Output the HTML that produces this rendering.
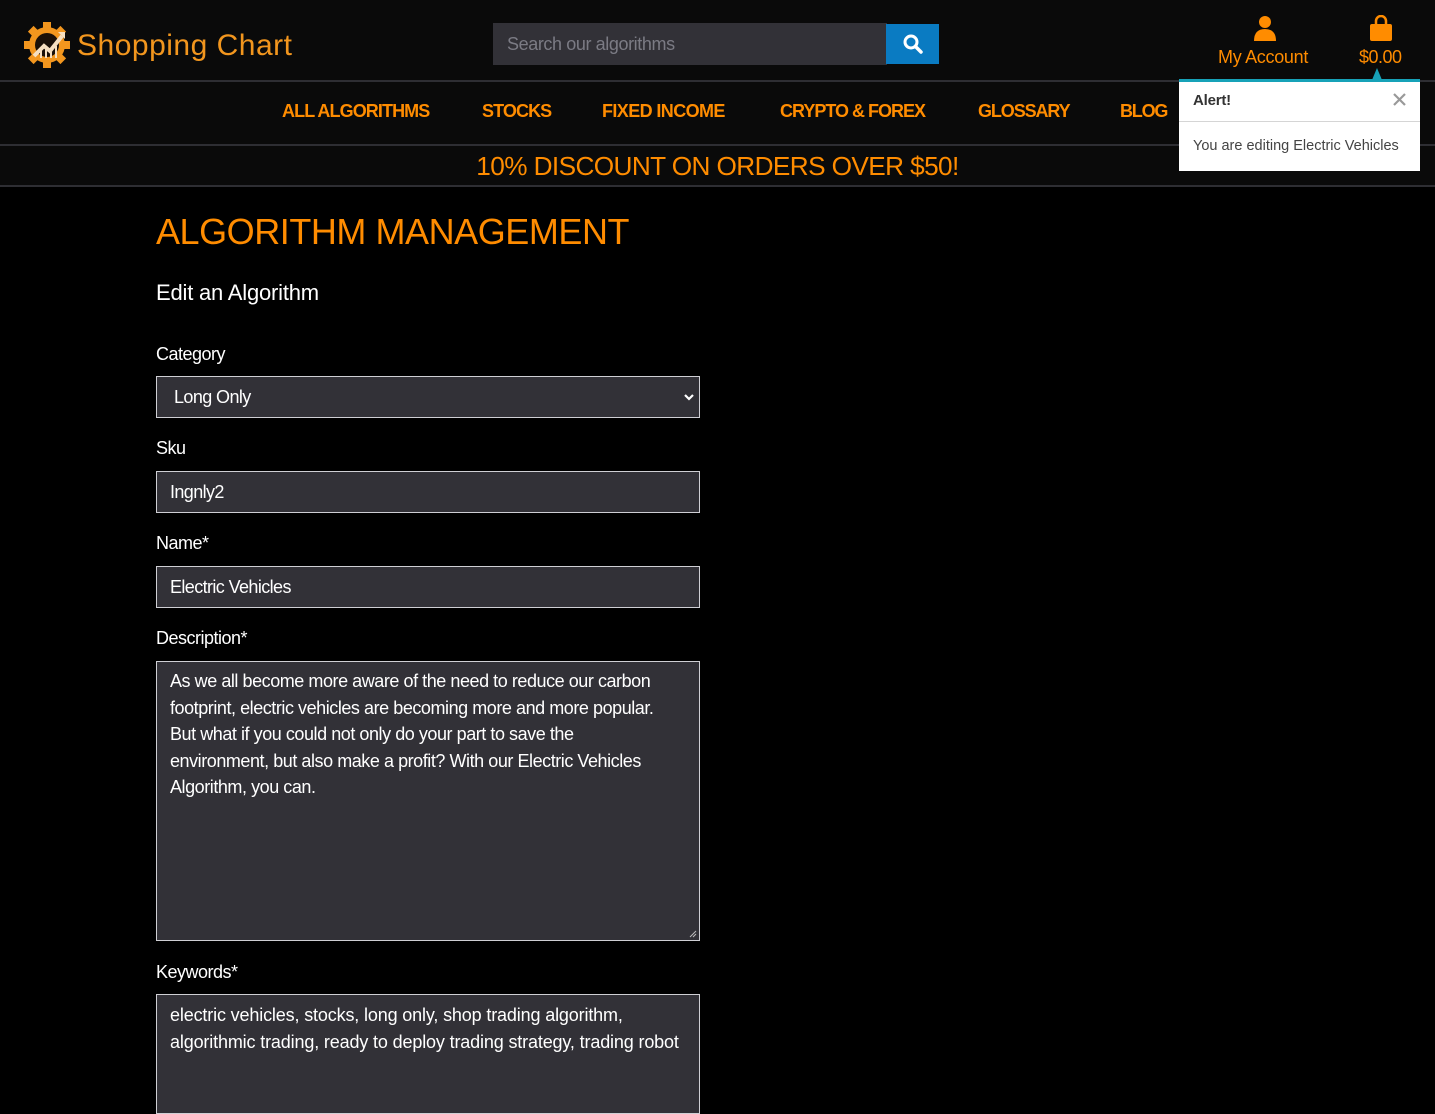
<!DOCTYPE html>
<html><head><meta charset="utf-8">
<style>
*{margin:0;padding:0;box-sizing:border-box}
body{width:1435px;height:1092px;background:#000;font-family:"Liberation Sans",sans-serif;position:relative;overflow:hidden;color:#fff}
.abs{position:absolute}
.hdr{left:0;top:0;width:1435px;height:187px;background:#0a0a0a}
.line{left:0;width:1435px;height:2px;background:#2e2e33}
.nav{top:101px;font-size:18px;font-weight:bold;color:#ff8c00;letter-spacing:-0.9px;white-space:nowrap}
.lbl{left:156px;font-size:18px;letter-spacing:-0.5px;color:#fff}
.box{left:156px;width:544px;background:#323137;border:1px solid #cfcfd4;font-size:18px;letter-spacing:-0.6px;color:#fff;padding-left:13px}
</style></head><body>
<div class="abs hdr"></div>
<div class="abs line" style="top:80px"></div>
<div class="abs line" style="top:144px"></div>
<div class="abs line" style="top:185px"></div>

<svg class="abs" style="left:22px;top:20px" width="50" height="50" viewBox="0 0 50 50">
<g fill="#f2961e">
<circle cx="25" cy="25" r="18"/>
<rect x="21" y="2" width="8" height="8"/><rect x="21" y="40" width="8" height="8"/>
<rect x="2" y="21" width="8" height="8"/><rect x="40" y="21" width="8" height="8"/>
<rect x="21" y="2" width="8" height="8" transform="rotate(45 25 25)"/><rect x="21" y="40" width="8" height="8" transform="rotate(45 25 25)"/>
<rect x="2" y="21" width="8" height="8" transform="rotate(45 25 25)"/><rect x="40" y="21" width="8" height="8" transform="rotate(45 25 25)"/>
</g>
<circle cx="25" cy="25" r="12" fill="#1a1008"/>
<path d="M12 36 L22 26 L28 31 L40 16" stroke="#f6dfc0" stroke-width="4" fill="none"/>
<path d="M36 12 L43 12 L43 19 Z" fill="#f6dfc0"/>
<path d="M19 38V30M24 38V28M29 38V32M34 38V26" stroke="#f6dfc0" stroke-width="2"/>
</svg>
<div class="abs" style="left:77px;top:29px;font-size:30px;color:#f2961e;letter-spacing:0.5px">Shopping Chart</div>

<div class="abs" style="left:493px;top:23px;width:394px;height:42px;background:#323137"></div>
<div class="abs" style="left:507px;top:34px;font-size:18px;color:#7b7b84;letter-spacing:-0.4px">Search our algorithms</div>
<div class="abs" style="left:886px;top:24px;width:53px;height:40px;background:#0a7bc2"></div>
<svg class="abs" style="left:902px;top:33px" width="22" height="22" viewBox="0 0 22 22"><circle cx="9" cy="9" r="6" stroke="#fff" stroke-width="3" fill="none"/><path d="M13.5 13.5L19 19" stroke="#fff" stroke-width="3.5" stroke-linecap="round"/></svg>

<svg class="abs" style="left:1253px;top:15px" width="24" height="26" viewBox="0 0 24 26"><circle cx="12" cy="7" r="6" fill="#ff8c00"/><path d="M1 26 Q1 14 12 14 Q23 14 23 26Z" fill="#ff8c00"/></svg>
<div class="abs" style="left:1218px;top:47px;font-size:18px;color:#ff8c00;letter-spacing:-0.3px">My Account</div>
<svg class="abs" style="left:1369px;top:15px" width="24" height="26" viewBox="0 0 24 26"><path d="M7 10V6a5 5 0 0 1 10 0v4" stroke="#ff8c00" stroke-width="2.5" fill="none"/><rect x="1" y="9" width="22" height="17" rx="2" fill="#ff8c00"/></svg>
<div class="abs" style="left:1359px;top:47px;font-size:18px;color:#ff8c00;letter-spacing:-0.5px">$0.00</div>

<div class="abs nav" style="left:282px">ALL ALGORITHMS</div>
<div class="abs nav" style="left:482px">STOCKS</div>
<div class="abs nav" style="left:602px;letter-spacing:-0.6px">FIXED INCOME</div>
<div class="abs nav" style="left:780px;letter-spacing:-1px">CRYPTO &amp; FOREX</div>
<div class="abs nav" style="left:978px;letter-spacing:-1.1px">GLOSSARY</div>
<div class="abs nav" style="left:1120px;letter-spacing:-1.2px">BLOG</div>

<div class="abs" style="left:0;top:151px;width:1435px;text-align:center;font-size:26.2px;color:#ff8c00;letter-spacing:-0.6px">10% DISCOUNT ON ORDERS OVER $50!</div>

<div class="abs" style="left:1372px;top:68px;width:0;height:0;border-left:5px solid transparent;border-right:5px solid transparent;border-bottom:12px solid #17a2b8"></div>
<div class="abs" style="left:1179px;top:79px;width:241px;height:92px;background:#fff;border-top:3px solid #17a2b8"></div>
<div class="abs" style="left:1179px;top:121px;width:241px;height:1px;background:#d5d5d5"></div>
<div class="abs" style="left:1193px;top:92px;font-size:15px;color:#333;font-weight:bold;letter-spacing:-0.2px">Alert!</div>
<svg class="abs" style="left:1393px;top:93px" width="13" height="13" viewBox="0 0 13 13"><path d="M1 1L12 12M12 1L1 12" stroke="#999" stroke-width="2.2"/></svg>
<div class="abs" style="left:1193px;top:138px;font-size:14.5px;color:#444;letter-spacing:0px">You are editing Electric Vehicles</div>

<div class="abs" style="left:156px;top:211px;font-size:36px;color:#ff8c00;letter-spacing:-0.45px">ALGORITHM MANAGEMENT</div>
<div class="abs" style="left:156px;top:280px;font-size:22px;letter-spacing:-0.2px">Edit an Algorithm</div>

<div class="abs lbl" style="top:344px">Category</div>
<div class="abs box" style="top:376px;height:42px;line-height:40px;padding-left:17px">Long Only</div>
<svg class="abs" style="left:683px;top:392px" width="12" height="10" viewBox="0 0 12 10"><path d="M2 3L6 7L10 3" stroke="#fff" stroke-width="2.2" fill="none"/></svg>

<div class="abs lbl" style="top:438px">Sku</div>
<div class="abs box" style="top:471px;height:42px;line-height:40px">Ingnly2</div>

<div class="abs lbl" style="top:533px">Name*</div>
<div class="abs box" style="top:566px;height:42px;line-height:40px">Electric Vehicles</div>

<div class="abs lbl" style="top:628px">Description*</div>
<div class="abs box" style="top:661px;height:280px;line-height:26.6px;padding-top:6px;font-size:18px;letter-spacing:-0.45px">As we all become more aware of the need to reduce our carbon<br>footprint, electric vehicles are becoming more and more popular.<br>But what if you could not only do your part to save the<br>environment, but also make a profit? With our Electric Vehicles<br>Algorithm, you can.</div>
<svg class="abs" style="left:689px;top:930px" width="8" height="8" viewBox="0 0 8 8"><path d="M7 1L1 7M7 4L4 7" stroke="#bbb" stroke-width="1"/></svg>

<div class="abs lbl" style="top:962px">Keywords*</div>
<div class="abs box" style="top:994px;height:120px;line-height:26.6px;padding-top:7px;font-size:18px;letter-spacing:-0.15px">electric vehicles, stocks, long only, shop trading algorithm,<br>algorithmic trading, ready to deploy trading strategy, trading robot</div>
</body></html>
